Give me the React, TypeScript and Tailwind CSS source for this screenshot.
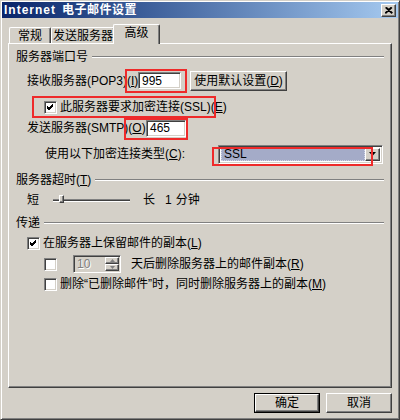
const raised =
  "border border-t-white border-l-white border-r-[#404040] border-b-[#404040] shadow-[inset_-1px_-1px_0_#808080]";
const sunken =
  "border border-t-[#808080] border-l-[#808080] border-r-white border-b-white shadow-[inset_1px_1px_0_#404040,inset_-1px_-1px_0_#d4d0c8]";

function Check({ checked = false }: { checked?: boolean }) {
  return (
    <div className={`w-[13px] h-[13px] bg-white shrink-0 flex items-center justify-center ${sunken}`}>
      {checked && (
        <svg width="7" height="7" viewBox="0 0 7 7">
          <path d="M0 2 L2 4 L6 0 M0 3 L2 5 L6 1 M0 4 L2 6 L6 2" stroke="#000" strokeWidth="1" fill="none" />
        </svg>
      )}
    </div>
  );
}

function GroupLabel({ children }: { children: React.ReactNode }) {
  return (
    <div className="flex items-center h-[14px]">
      <span className="whitespace-nowrap">{children}</span>
      <div className="flex-1 ml-[4px] border-t border-t-[#808080] border-b border-b-white" />
    </div>
  );
}

function Tab({ label, active = false, w }: { label: string; active?: boolean; w: string }) {
  return (
    <div
      className={`${w} flex items-center justify-center rounded-t-[2px] border-t border-l border-t-white border-l-white border-r border-r-[#404040] shadow-[inset_-1px_0_0_#808080] bg-[#d4d0c8] ${
        active ? "h-[20px] -mb-[1px] -ml-[2px] relative z-10 pb-[3px]" : "h-[16px]"
      }`}
    >
      {label}
    </div>
  );
}

export default function App() {
  return (
    <div className="relative w-[400px] h-[420px] bg-[#d4d0c8] p-[1px] border border-t-[#d4d0c8] border-l-[#d4d0c8] border-r-[#404040] border-b-[#404040] shadow-[inset_1px_1px_0_white,inset_-1px_-1px_0_#808080] text-[12px] leading-none text-black font-['Liberation_Sans','Noto_Sans_CJK_SC',sans-serif] overflow-hidden">
      {/* title bar */}
      <div className="h-[16px] bg-gradient-to-r from-[#0a246a] to-[#a6caf0] flex items-center pl-[2px] pr-[2px]">
        <span className="text-white font-bold tracking-[1px]">Internet</span>
        <span className="ml-[6px] text-white font-bold tracking-[0.5px]">电子邮件设置</span>
        <div className={`ml-auto w-[15px] h-[13px] bg-[#d4d0c8] flex items-center justify-center ${raised}`}>
          <svg width="8" height="7" viewBox="0 0 8 7">
            <path d="M0.5 0.5 L7 6.5 M1.5 0.5 L7.5 6 M7 0.5 L0.5 6.5 M6 0.5 L0 6" stroke="#000" strokeWidth="1.2" fill="none" />
          </svg>
        </div>
      </div>

      <div className="px-[6px]">
        {/* tabs */}
        <div className="mt-[6px] h-[19px] flex items-end pl-[1px]">
          <Tab label="常规" w="w-[42px]" />
          <Tab label="发送服务器" w="w-[64px]" />
          <Tab label="高级" w="w-[47px]" active />
        </div>

        {/* panel */}
        <div className="h-[345px] border border-t-white border-l-white border-r-[#404040] border-b-[#404040] shadow-[inset_-1px_-1px_0_#808080] pl-[7px] pr-[7px] pt-[6px]">
          <GroupLabel>服务器端口号</GroupLabel>

          <div className="mt-[6px] h-[21px] flex items-center">
            <span className="ml-[11px] w-[111px] whitespace-nowrap">接收服务器(POP3)(<u>I</u>):</span>
            <div className={`w-[43px] h-[17px] bg-white flex items-center pl-[3px] ${sunken}`}>995</div>
            <div className={`ml-[9px] w-[97px] h-[20px] flex items-center justify-center ${raised}`}>
              使用默认设置(<u>D</u>)
            </div>
          </div>

          <div className="mt-[6px] h-[20px] flex items-center">
            <div className="ml-[28px]">
              <Check checked />
            </div>
            <span className="ml-[3px] whitespace-nowrap">此服务器要求加密连接(SSL)(<u>E</u>)</span>
          </div>

          <div className="mt-[1px] h-[20px] flex items-center">
            <span className="ml-[11px] w-[119px] whitespace-nowrap">发送服务器(SMTP)(<u>O</u>):</span>
            <div className={`w-[40px] h-[17px] bg-white flex items-center pl-[3px] ${sunken}`}>465</div>
          </div>

          <div className="mt-[6px] h-[20px] flex items-center">
            <span className="ml-[29px] w-[173px] whitespace-nowrap">使用以下加密连接类型(<u>C</u>):</span>
            <div className={`w-[165px] h-[19px] bg-white flex items-center p-[2px] ${sunken}`}>
              <div className="flex-1 h-full bg-[#a4abc8] border border-dotted border-[#d0d4e4] flex items-center pl-[2px]">
                SSL
              </div>
              <div className={`w-[15px] h-full bg-[#d4d0c8] flex items-center justify-center ${raised}`}>
                <svg width="7" height="4" viewBox="0 0 7 4">
                  <path d="M0 0 H7 L3.5 4 Z" fill="#000" />
                </svg>
              </div>
            </div>
          </div>

          <div className="mt-[9px]">
            <GroupLabel>
              服务器超时(<u>T</u>)
            </GroupLabel>
          </div>

          <div className="mt-[5px] h-[16px] flex items-center">
            <span className="ml-[11px] w-[26px]">短</span>
            <div className="relative w-[77px] h-[16px] flex items-center">
              <div className="w-full h-[3px] border-t border-t-[#808080] border-b border-b-white bg-[#404040]" />
              <div className={`absolute left-[6px] top-[3px] w-[5px] h-[8px] bg-[#d4d0c8] ${raised}`} />
            </div>
            <span className="ml-[13px]">长</span>
            <span className="ml-[10px]">1</span>
            <span className="ml-[4px]">分钟</span>
          </div>

          <div className="mt-[8px]">
            <GroupLabel>传递</GroupLabel>
          </div>

          <div className="mt-[5px] h-[16px] flex items-center">
            <div className="ml-[11px]">
              <Check checked />
            </div>
            <span className="ml-[3px] whitespace-nowrap">在服务器上保留邮件的副本(<u>L</u>)</span>
          </div>

          <div className="mt-[4px] h-[18px] flex items-center">
            <div className="ml-[28px]">
              <Check />
            </div>
            <div className={`ml-[16px] w-[48px] h-[18px] bg-[#d4d0c8] flex items-center ${sunken}`}>
              <span className="ml-[3px] text-[#808080] [text-shadow:1px_1px_0_white]">10</span>
              <div className="ml-auto mr-[1px] w-[14px] h-[14px] flex flex-col">
                <div className={`h-[7px] flex items-center justify-center ${raised}`}>
                  <svg width="5" height="3" viewBox="0 0 5 3">
                    <path d="M2.5 0 L5 3 H0 Z" fill="#808080" />
                  </svg>
                </div>
                <div className={`h-[7px] flex items-center justify-center ${raised}`}>
                  <svg width="5" height="3" viewBox="0 0 5 3">
                    <path d="M0 0 H5 L2.5 3 Z" fill="#808080" />
                  </svg>
                </div>
              </div>
            </div>
            <span className="ml-[10px] whitespace-nowrap">天后删除服务器上的邮件副本(<u>R</u>)</span>
          </div>

          <div className="mt-[3px] h-[16px] flex items-center">
            <div className="ml-[28px]">
              <Check />
            </div>
            <span className="ml-[3px] whitespace-nowrap">删除“已删除邮件”时，同时删除服务器上的副本(<u>M</u>)</span>
          </div>
        </div>

        {/* footer buttons */}
        <div className="mt-[5px] flex justify-end gap-[6px]">
          <div className="w-[66px] h-[20px] border border-black">
            <div className={`w-full h-full flex items-center justify-center ${raised}`}>确定</div>
          </div>
          <div className={`w-[66px] h-[20px] flex items-center justify-center ${raised}`}>取消</div>
        </div>
      </div>

      {/* red annotation boxes */}
      <div className="absolute left-[124px] top-[68px] w-[62px] h-[24px] border-2 border-[#ee2a2a] pointer-events-none" />
      <div className="absolute left-[31px] top-[95px] w-[184px] h-[22px] border-2 border-[#ee2a2a] pointer-events-none" />
      <div className="absolute left-[123px] top-[117px] w-[64px] h-[22px] border-2 border-[#ee2a2a] pointer-events-none" />
      <div className="absolute left-[211px] top-[146px] w-[161px] h-[19px] border-2 border-[#ee2a2a] pointer-events-none" />
    </div>
  );
}
